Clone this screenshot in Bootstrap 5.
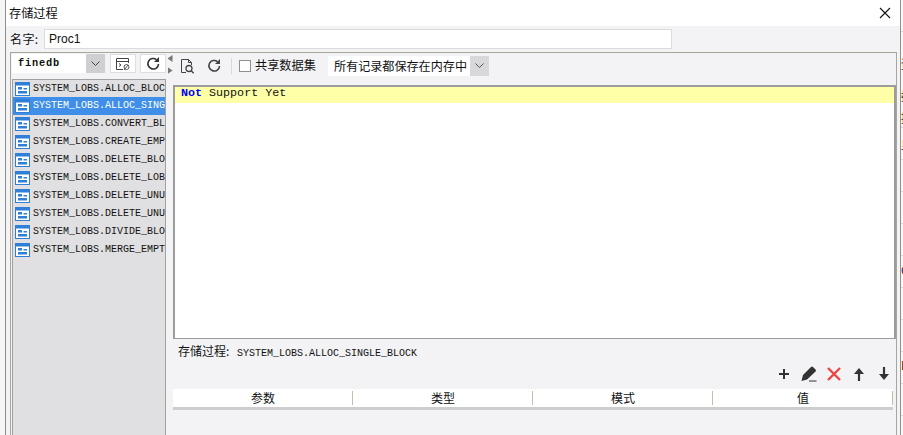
<!DOCTYPE html>
<html lang="zh">
<head>
<meta charset="utf-8">
<title>存储过程</title>
<link href="https://cdn.jsdelivr.net/npm/bootstrap@5.3.0/dist/css/bootstrap.min.css" rel="stylesheet">
<style>
html,body{height:435px;overflow:hidden;margin:0;background:#f6f6f6;font-family:"Noto Sans CJK SC","Liberation Sans",sans-serif;font-size:12px;color:#111}
.stage{height:435px;padding-left:5px}
.dlg{width:896px;height:435px;background:#f3f3f5;border-left:1px solid #8f8f8f;border-right:1px solid #8f8f8f;flex:none}
.behind{width:2px;flex:1 0 2px;overflow:hidden;font-size:12px;line-height:14px;background:repeating-linear-gradient(#f8f8f8 0 31px,#d8d8d8 31px 32px)}
.behind span{display:block;width:12px;height:14px}
.b1{margin-top:57px}.b2{margin-top:18px}.b3{margin-top:8px}.b4{margin-top:13px}.b5{margin-top:111px;color:#224}.b6{margin-top:81px}
.ttl{height:26px;background:#fff;padding-left:3px;font-size:12.2px;line-height:26px;flex:none}
.xbtn{width:12px;height:12px;margin-right:9px}
.namerow{height:26px;padding-left:4px;flex:none}
.namerow label{width:34px;font-size:12px;letter-spacing:.4px}
.namerow .form-control{width:628px;height:20px;margin-top:-1px;padding:0 4px;border-radius:0;border:1px solid #dcdcdc;font-family:"Liberation Sans",sans-serif;font-size:12px;color:#111;background:#fff}
.panel{margin-left:4px;width:887px;flex:1 1 0;min-height:0;border:1px solid #a8a59a;border-bottom:0}
.lft{width:156px;padding:1px 0 0 1px;flex:none}
.combo{width:93px;height:19px;background:#fff}
.combo .cname{flex:1;padding-left:6px;font-family:"Liberation Mono",monospace;font-size:10.3px;letter-spacing:.8px;font-weight:700;line-height:19px}
.caretb{width:19px;background:#cfcfd1;flex:none}
.tool{width:26px;height:19px;background:#fff;border:1px solid #dedede;margin-left:4px}
.tool:first-of-type{margin-left:5px}
.tree{margin-top:6px;flex:1;min-height:0;background:#e0e0e2;border:1px solid #a0a09c;border-bottom:0;border-radius:0;overflow:hidden;width:154px}
.tree .list-group-item{height:18px;padding:0 0 0 2px;border:0;border-radius:0;background:transparent;color:#111;font-family:"Liberation Mono",monospace;font-size:10px;line-height:18px;white-space:nowrap;overflow:hidden;gap:3px}
.tree .list-group-item.active{background:#3f8fe9;color:#fff}
.tree svg{flex:none}
.split{width:6px;padding-top:2px;flex:none;gap:5px}
.split i{display:block;width:5px;height:7px;background:#777}
.split .sl{clip-path:polygon(100% 0,0 50%,100% 100%)}
.split .sr{clip-path:polygon(0 0,100% 50%,0 100%)}
.rgt{min-width:0;flex:1}
.bar{height:32px;padding:0 0 7px 7px;flex:none}
.vs{width:1px;height:16px;background:#d8d8d8;margin:0 7px 0 9px}
.cbox{width:12px;height:12px;border:1px solid #8f8f8f;background:#fff;margin-right:4px}
.share{font-size:12.2px}
.modes{width:161px;height:20px;margin-left:12px;background:#fff;font-size:12.1px;line-height:20px}
.modes b{font-weight:400;flex:1;padding-left:6px}
.modes .caretb{background:#d8d8da}
.editor{height:254px;flex:none;width:723px;background:#fff;border:2px solid #9c9c9c;border-bottom-width:1px}
.hline{height:16px;background:#ffffa8;font-family:"Liberation Mono",monospace;font-size:11.7px;line-height:12px;padding-left:6px}
.hline em{font-style:normal;color:#00f;font-weight:700}
.procrow{height:23px;padding-left:5px;line-height:23px;flex:none;font-size:12px}
.procrow code{font-family:"Liberation Mono",monospace;font-size:10px;color:#111;margin-left:5px}
.acts{height:24px;gap:9px;padding:0 1px 0 0;flex:none;width:720px}
.acts+.params{margin-top:3px}
.params{width:720px;table-layout:fixed;border-collapse:separate;border-spacing:0;--bs-table-bg:#fff;flex:none}
.params th{height:21px;padding:0;font-weight:400;font-size:12px;line-height:18px;text-align:center;color:#111;border-bottom:3px solid #cdcdcd;background:linear-gradient(#c2bfa9,#c2bfa9) right center/1px 14px no-repeat #fff}
</style>
</head>
<body>
<div class="stage d-flex">
  <div class="dlg d-flex flex-column">
    <div class="ttl d-flex align-items-center justify-content-between">
      <span>存储过程</span>
      <svg class="xbtn" viewBox="0 0 12 12"><path d="M1 1l10 10M11 1L1 11" stroke="#111" stroke-width="1.1" fill="none"/></svg>
    </div>
    <div class="namerow d-flex align-items-center">
      <label for="pn">名字:</label>
      <input id="pn" class="form-control" value="Proc1">
    </div>
    <div class="panel d-flex">
      <div class="lft d-flex flex-column">
        <div class="d-flex">
          <div class="combo d-flex">
            <span class="cname">finedb</span>
            <span class="caretb d-flex align-items-center justify-content-center"><svg width="9" height="5" viewBox="0 0 9 5"><path d="M.5.5l4 4 4-4" stroke="#444" fill="none"/></svg></span>
          </div>
          <span class="tool d-flex align-items-center justify-content-center">
            <svg width="16" height="14" viewBox="0 0 16 14"><path d="M8 12.500H1.500v-11h12V6M1.500 4.500h12" stroke="#444" fill="none"/><path d="M4 6.500l2 1.500-2 1.500" stroke="#444" fill="none"/><circle cx="11.500" cy="10" r="2.500" stroke="#555" fill="none"/><path d="M9 13l4-5" stroke="#555"/></svg>
          </span>
          <span class="tool d-flex align-items-center justify-content-center">
            <svg width="15" height="15" viewBox="0 0 15 15"><path d="M12.500 8a5.300 5.300 0 1 1-2-4.400" stroke="#333" stroke-width="1.600" fill="none"/><path d="M13 1v5H8z" fill="#333"/></svg>
          </span>
        </div>
        <div class="tree list-group">
          <div class="list-group-item d-flex align-items-center"><svg width="15" height="14" viewBox="0 0 15 14"><use href="#ti"/></svg>SYSTEM_LOBS.ALLOC_BLOCK</div>
          <div class="list-group-item active d-flex align-items-center"><svg width="15" height="14" viewBox="0 0 15 14"><use href="#ti"/></svg>SYSTEM_LOBS.ALLOC_SINGLE</div>
          <div class="list-group-item d-flex align-items-center"><svg width="15" height="14" viewBox="0 0 15 14"><use href="#ti"/></svg>SYSTEM_LOBS.CONVERT_BLOCK</div>
          <div class="list-group-item d-flex align-items-center"><svg width="15" height="14" viewBox="0 0 15 14"><use href="#ti"/></svg>SYSTEM_LOBS.CREATE_EMPTY</div>
          <div class="list-group-item d-flex align-items-center"><svg width="15" height="14" viewBox="0 0 15 14"><use href="#ti"/></svg>SYSTEM_LOBS.DELETE_BLOCK</div>
          <div class="list-group-item d-flex align-items-center"><svg width="15" height="14" viewBox="0 0 15 14"><use href="#ti"/></svg>SYSTEM_LOBS.DELETE_LOBS</div>
          <div class="list-group-item d-flex align-items-center"><svg width="15" height="14" viewBox="0 0 15 14"><use href="#ti"/></svg>SYSTEM_LOBS.DELETE_UNUSED</div>
          <div class="list-group-item d-flex align-items-center"><svg width="15" height="14" viewBox="0 0 15 14"><use href="#ti"/></svg>SYSTEM_LOBS.DELETE_UNUSED</div>
          <div class="list-group-item d-flex align-items-center"><svg width="15" height="14" viewBox="0 0 15 14"><use href="#ti"/></svg>SYSTEM_LOBS.DIVIDE_BLOCK</div>
          <div class="list-group-item d-flex align-items-center"><svg width="15" height="14" viewBox="0 0 15 14"><use href="#ti"/></svg>SYSTEM_LOBS.MERGE_EMPTY</div>
        </div>
      </div>
      <div class="split d-flex flex-column align-items-center"><i class="sl"></i><i class="sr"></i></div>
      <div class="rgt d-flex flex-column">
        <div class="bar d-flex align-items-center">
          <svg width="15" height="16" viewBox="0 0 15 16"><path d="M6 14.500H1.500v-13h7l3 3V7M8.500 1.500v3h3" stroke="#444" fill="none"/><circle cx="9" cy="10.500" r="3" stroke="#444" stroke-width="1.300" fill="none"/><path d="M11.200 12.700l2.500 2.500" stroke="#444" stroke-width="1.400"/></svg>
          <svg class="ms-3" width="15" height="15" viewBox="0 0 15 15"><path d="M12.500 8a5.300 5.300 0 1 1-2-4.400" stroke="#444" stroke-width="1.600" fill="none"/><path d="M13 1v5H8z" fill="#444"/></svg>
          <span class="vs"></span>
          <span class="cbox"></span>
          <span class="share">共享数据集</span>
          <span class="modes d-flex"><b>所有记录都保存在内存中</b><span class="caretb d-flex align-items-center justify-content-center"><svg width="9" height="5" viewBox="0 0 9 5"><path d="M.5.5l4 4 4-4" stroke="#555" fill="none"/></svg></span></span>
        </div>
        <div class="editor"><div class="hline"><em>Not</em> Support Yet</div></div>
        <div class="procrow">存储过程:&nbsp;<code>SYSTEM_LOBS.ALLOC_SINGLE_BLOCK</code></div>
        <div class="acts d-flex align-items-center justify-content-end">
          <svg width="16" height="16" viewBox="0 0 16 16"><path d="M8 3v10M3 8h10" stroke="#333" stroke-width="2"/></svg>
          <svg width="16" height="16" viewBox="0 0 16 16"><path d="M.5 15l1.500-6L10 1l1.500-.5 3.500 3.500-.5 1.500L6 13.500z" fill="#333"/><path d="M8 15h7.500" stroke="#333"/></svg>
          <svg width="16" height="16" viewBox="0 0 16 16"><path d="M2 2l12 12M14 2L2 14" stroke="#ee4444" stroke-width="2.400"/></svg>
          <svg width="16" height="16" viewBox="0 0 16 16"><path d="M8 15V6" stroke="#333" stroke-width="2.200"/><path d="M3 8l5-6 5 6z" fill="#333"/></svg>
          <svg width="16" height="16" viewBox="0 0 16 16"><path d="M8 1v9" stroke="#333" stroke-width="2.200"/><path d="M3 8h10l-5 6z" fill="#333"/></svg>
        </div>
        <table class="table params">
          <thead><tr><th>参数</th><th>类型</th><th>模式</th><th>值</th></tr></thead>
        </table>
      </div>
    </div>
  </div>
  <div class="behind" aria-hidden="true">
    <span class="b1">资</span><span class="b2">据</span><span class="b3">提</span><span class="b4">显</span><span class="b5">O</span><span class="b6">D</span>
  </div>
</div>
<svg width="0" height="0" class="d-block"><defs><g id="ti"><rect x=".5" y=".5" width="14" height="13" fill="#fff" stroke="#2f7fd8"/><rect x="1" y="1" width="13" height="2.500" fill="#2f7fd8"/><rect x="3" y="5" width="4" height="2.500" fill="#2f7fd8"/><rect x="3" y="9" width="9" height="2.500" fill="#2f7fd8"/><rect x="8.500" y="6" width="3.500" height="1.500" fill="#2f7fd8"/></g></defs></svg>
<script src="https://cdn.jsdelivr.net/npm/bootstrap@5.3.0/dist/js/bootstrap.bundle.min.js"></script>
</body>
</html>
